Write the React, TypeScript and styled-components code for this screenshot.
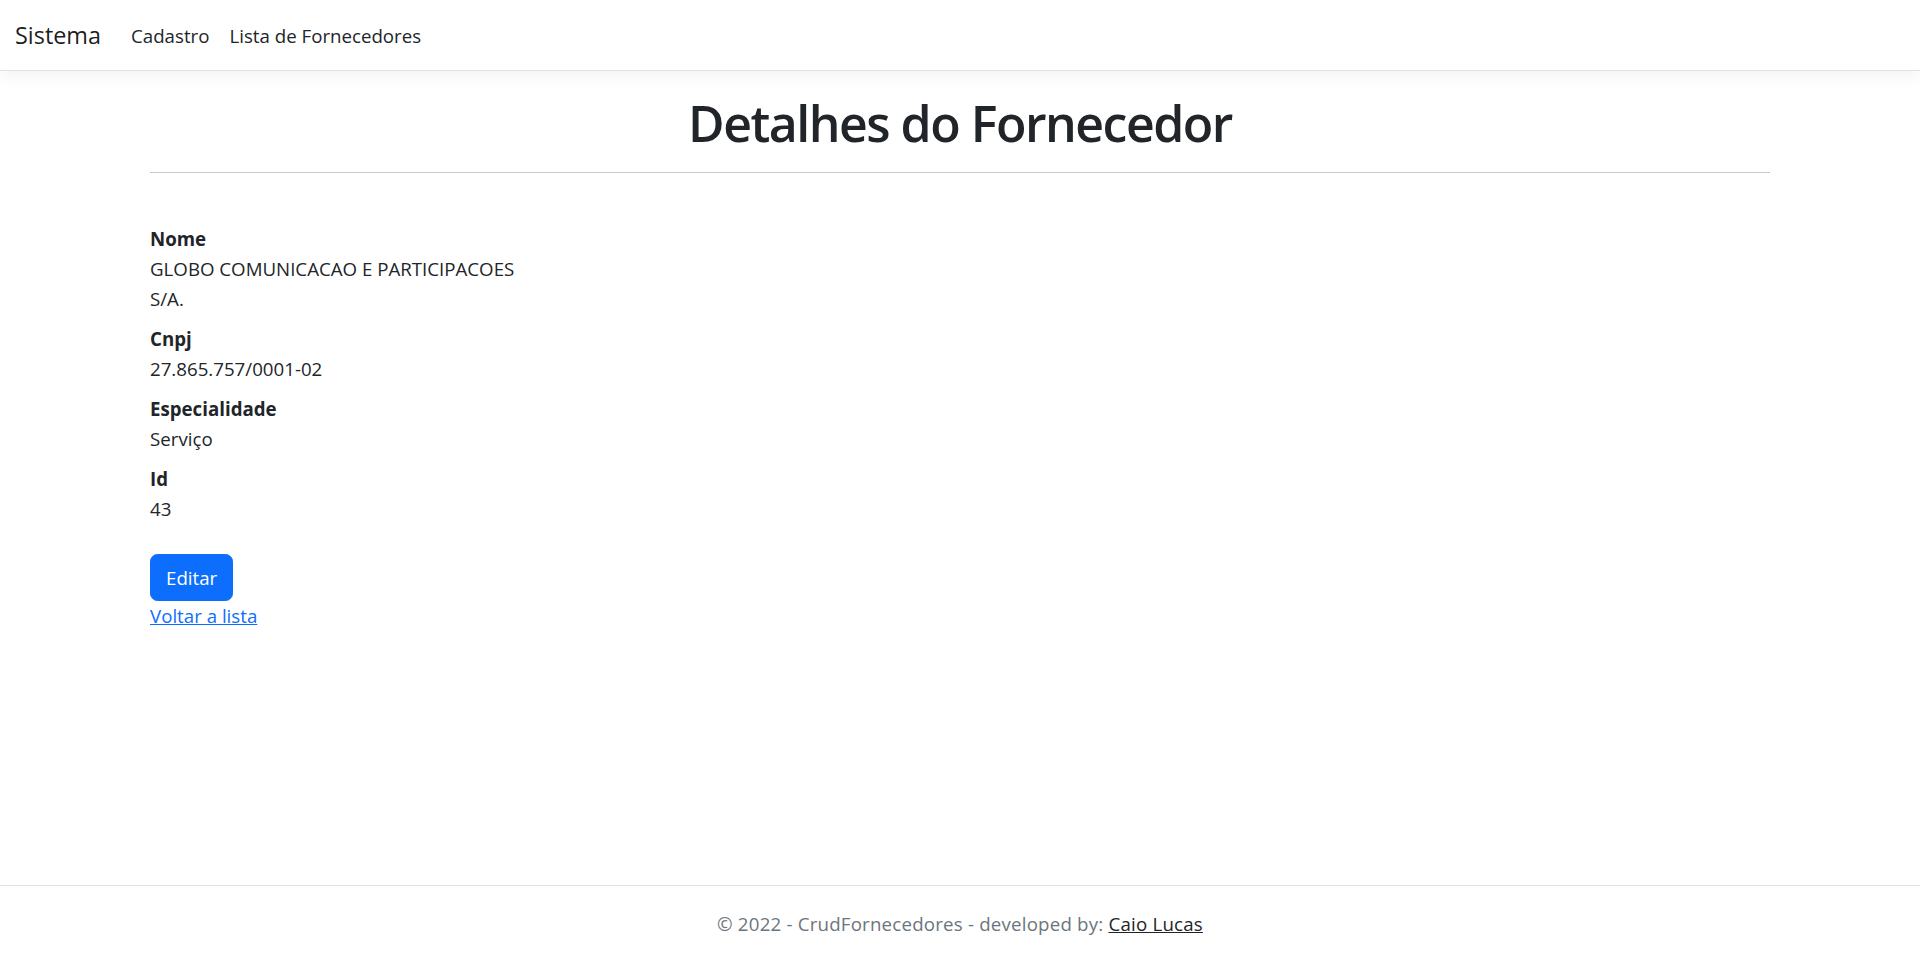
import React from 'react';
import styled, { createGlobalStyle } from 'styled-components';

const GlobalStyle = createGlobalStyle`
  html, body {
    margin: 0;
    padding: 0;
  }
  body {
    font-family: "Open Sans", "Noto Sans", "Liberation Sans", sans-serif;
    font-size: 18.7px;
    line-height: 30px;
    color: #212529;
    background-color: #fff;
  }
  * {
    box-sizing: border-box;
  }
`

const StyledPage = styled.div`
  display: flex;
  flex-direction: column;
  min-height: 100vh;
`
const StyledNavbar = styled.nav`
  display: flex;
  align-items: center;
  padding: 11px 15px 9px;
  background-color: #fff;
  border-bottom: 1px solid #dee2e6;
  box-shadow: 0 5px 15px rgba(0, 0, 0, 0.05);
  margin-bottom: 20px;
`
const StyledBrand = styled.a`
  font-size: 23.4px;
  line-height: 37.5px;
  padding: 6.25px 0;
  margin-right: 20px;
  color: rgba(0, 0, 0, 0.9);
  text-decoration: none;
`
const StyledNavLink = styled.a`
  padding: 10px;
  line-height: 30px;
  color: #212529;
  text-decoration: none;
`
const StyledContainer = styled.main`
  flex: 1;
  width: 1620px;
  margin: 0 auto;
`
const StyledTitle = styled.h1`
  margin: 2px 0 0;
  font-size: 50px;
  line-height: 60px;
  font-weight: 600;
  letter-spacing: -1.5px;
  text-align: center;
`
const StyledRule = styled.hr`
  margin: 19px 0 51px;
  border: 0;
  border-top: 1px solid #c8c9ca;
`
const StyledList = styled.dl`
  width: 400px;
  margin: 0 0 30px;
`
const StyledTerm = styled.dt`
  font-weight: 700;
  margin: 0;
`
const StyledValue = styled.dd`
  margin: 0 0 10px;
`
const StyledActions = styled.div`
  display: flex;
  flex-direction: column;
  align-items: flex-start;
`
const StyledButton = styled.button`
  font-family: inherit;
  font-size: 18.7px;
  line-height: 30px;
  padding: 7.5px 15px;
  color: #fff;
  background-color: #0d6efd;
  border: 1px solid #0d6efd;
  border-radius: 7.5px;
  cursor: pointer;
`
const StyledLink = styled.a`
  color: #0d6efd;
  text-decoration: underline;
`
const StyledFooter = styled.footer`
  border-top: 1px solid #dee2e6;
  line-height: 75px;
  color: #6c757d;
  text-align: center;
  white-space: nowrap;
  letter-spacing: 0.2px;
`
const StyledAuthor = styled.a`
  color: #212529;
  text-decoration: underline;
`

const fornecedor = [
  { label: 'Nome', value: 'GLOBO COMUNICACAO E PARTICIPACOES S/A.' },
  { label: 'Cnpj', value: '27.865.757/0001-02' },
  { label: 'Especialidade', value: 'Serviço' },
  { label: 'Id', value: '43' },
]

export default function App() {
  return <StyledPage>
    <GlobalStyle/>

    <StyledNavbar>
      <StyledBrand href="#">Sistema</StyledBrand>
      <StyledNavLink href="#">Cadastro</StyledNavLink>
      <StyledNavLink href="#">Lista de Fornecedores</StyledNavLink>
    </StyledNavbar>

    <StyledContainer>
      <StyledTitle>Detalhes do Fornecedor</StyledTitle>
      <StyledRule/>

      <StyledList>
        {fornecedor.map(item => <React.Fragment key={item.label}>
          <StyledTerm>{item.label}</StyledTerm>
          <StyledValue>{item.value}</StyledValue>
        </React.Fragment>)}
      </StyledList>

      <StyledActions>
        <StyledButton>Editar</StyledButton>
        <StyledLink href="#">Voltar a lista</StyledLink>
      </StyledActions>
    </StyledContainer>

    <StyledFooter>
      &copy; 2022 - CrudFornecedores - developed by: <StyledAuthor href="#">Caio Lucas</StyledAuthor>
    </StyledFooter>
  </StyledPage>
}
